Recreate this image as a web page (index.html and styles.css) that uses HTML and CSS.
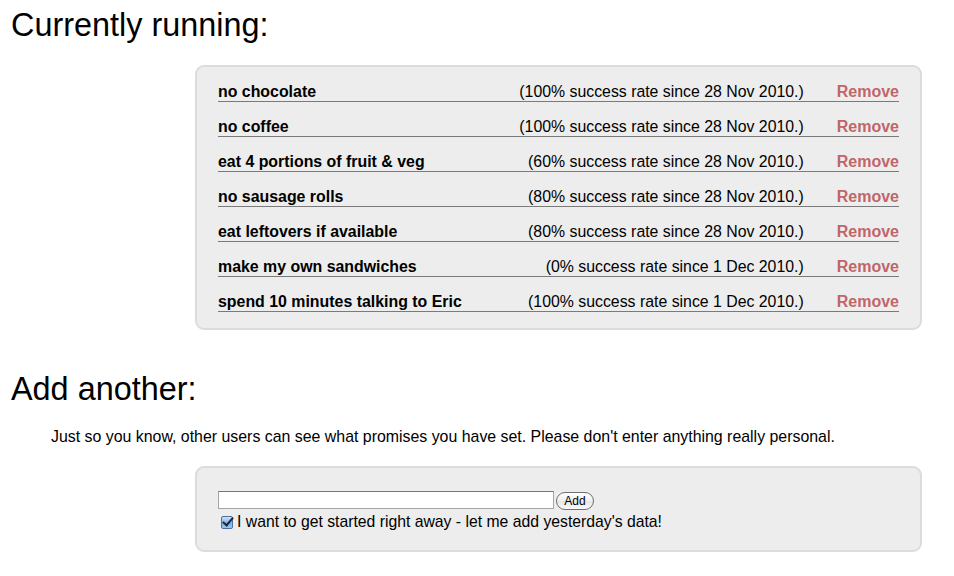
FILE: index.html
```html
<!DOCTYPE html>
<html>
<head>
<meta charset="utf-8">
<title>Promises</title>
<link rel="stylesheet" href="styles.css">
</head>
<body>
<h1 class="title">Currently running:</h1>
<div class="panel list-panel">
  <div class="row"><span class="name">no chocolate</span><span class="stat">(100% success rate since 28 Nov 2010.)</span><a class="remove" href="#">Remove</a></div>
  <div class="row"><span class="name">no coffee</span><span class="stat">(100% success rate since 28 Nov 2010.)</span><a class="remove" href="#">Remove</a></div>
  <div class="row"><span class="name">eat 4 portions of fruit &amp; veg</span><span class="stat">(60% success rate since 28 Nov 2010.)</span><a class="remove" href="#">Remove</a></div>
  <div class="row"><span class="name">no sausage rolls</span><span class="stat">(80% success rate since 28 Nov 2010.)</span><a class="remove" href="#">Remove</a></div>
  <div class="row"><span class="name">eat leftovers if available</span><span class="stat">(80% success rate since 28 Nov 2010.)</span><a class="remove" href="#">Remove</a></div>
  <div class="row"><span class="name">make my own sandwiches</span><span class="stat">(0% success rate since 1 Dec 2010.)</span><a class="remove" href="#">Remove</a></div>
  <div class="row"><span class="name">spend 10 minutes talking to Eric</span><span class="stat">(100% success rate since 1 Dec 2010.)</span><a class="remove" href="#">Remove</a></div>
</div>
<h1 class="title second">Add another:</h1>
<p class="note">Just so you know, other users can see what promises you have set. Please don't enter anything really personal.</p>
<form class="panel form-panel">
  <div class="input-row"><input class="text" type="text"><button class="add" type="button">Add</button></div>
  <label class="check-row"><input class="check" type="checkbox" checked><span>I want to get started right away - let me add yesterday's data!</span></label>
</form>
</body>
</html>
```
FILE: styles.css
```css
html, body {
  margin: 0;
  padding: 0;
  background: #fff;
  color: #000;
  font-family: "Liberation Sans", Arial, sans-serif;
}
.title {
  font-size: 32.4px;
  font-weight: normal;
  line-height: 36px;
  margin: 7px 0 0 11px;
}
.title.second {
  margin-top: 41px;
}
.panel {
  margin: 22px 0 0 195px;
  width: 727px;
  box-sizing: border-box;
  border: 2px solid #dcdcdc;
  border-radius: 9px;
  background: #ededed;
}
.list-panel {
  padding: 0 21px 16px;
}
.row {
  display: flex;
  align-items: baseline;
  padding: 15px 0 0;
  line-height: 19px;
  font-size: 16px;
  border-bottom: 1px solid #7a7a7a;
}
.name {
  flex: 1;
  font-weight: bold;
  font-size: 15.9px;
}
.stat {
  text-align: right;
  font-size: 15.85px;
}
.remove {
  margin-left: 33px;
  font-weight: bold;
  color: #c06668;
  text-decoration: none;
}
.note {
  margin: 21px 0 0 51px;
  font-size: 15.9px;
  line-height: 18px;
}
.form-panel {
  margin-top: 20px;
  padding: 23px 21px 19px;
}
.input-row {
  display: flex;
  align-items: center;
  height: 18px;
}
.text {
  box-sizing: border-box;
  width: 336px;
  height: 18px;
  margin: 0;
  padding: 0 2px;
  border: 1px solid #a5a5a5;
  border-top-color: #777;
  background: #fff;
  font: 13px "Liberation Sans", Arial, sans-serif;
}
.add {
  box-sizing: border-box;
  height: 18px;
  width: 38px;
  margin: 1px 0 0 2px;
  padding: 0;
  border: 1px solid #6f6f6f;
  border-radius: 9px;
  background: linear-gradient(#ffffff, #f0f0f0 50%, #e6e6e6 51%, #fafafa);
  font: 12px/16px "Liberation Sans", Arial, sans-serif;
  color: #000;
}
.check-row {
  display: flex;
  align-items: center;
  margin-top: 3px;
  font-size: 15.75px;
  line-height: 19px;
}
.check {
  appearance: none;
  -webkit-appearance: none;
  box-sizing: border-box;
  width: 12px;
  height: 13px;
  margin: 1px 4px 0 3px;
  border: 1px solid #4f6f9c;
  border-radius: 2px;
  background: linear-gradient(#cfe3f8, #7fb0e6 55%, #9cc5f0);
  position: relative;
}
.check::after {
  content: "";
  position: absolute;
  left: 3px;
  top: -2px;
  width: 4px;
  height: 9px;
  border: solid #1a2a40;
  border-width: 0 2px 2px 0;
  transform: rotate(40deg);
}
```
